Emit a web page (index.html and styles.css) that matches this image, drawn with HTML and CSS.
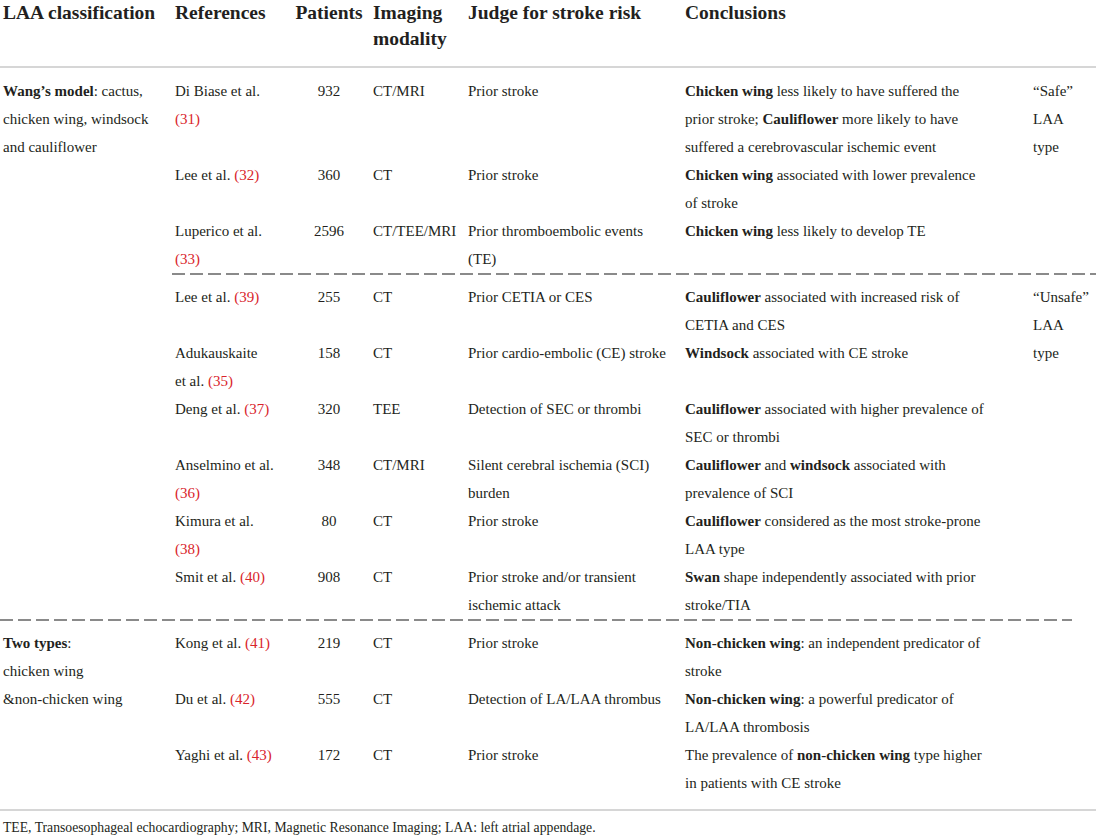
FILE: index.html
```html
<!DOCTYPE html>
<html lang="en">
<head>
  <meta charset="UTF-8">
  <title>LAA morphology and stroke risk</title>
  <link rel="stylesheet" href="styles.css">
</head>
<body>

  <table class="laa">
    <colgroup>
      <col class="c-class">
      <col class="c-ref">
      <col class="c-pat">
      <col class="c-img">
      <col class="c-judge">
      <col class="c-concl">
      <col class="c-type">
    </colgroup>
    <thead>
      <tr>
        <th>LAA classification</th>
        <th>References</th>
        <th class="num">Patients</th>
        <th>Imaging<br>modality</th>
        <th>Judge for stroke risk</th>
        <th>Conclusions</th>
        <th></th>
      </tr>
    </thead>
    <tbody>
      <tr class="first">
        <td rowspan="10"><b>Wang’s model</b>: cactus,<br>chicken wing, windsock<br>and cauliflower</td>
        <td>Di Biase et al.<br><span class="ref">(31)</span></td>
        <td class="num">932</td>
        <td>CT/MRI</td>
        <td>Prior stroke</td>
        <td><b>Chicken wing</b> less likely to have suffered the<br>prior stroke; <b>Cauliflower</b> more likely to have<br>suffered a cerebrovascular ischemic event</td>
        <td rowspan="3" class="type">“Safe”<br>LAA<br>type</td>
      </tr>
      <tr>
        <td>Lee et al. <span class="ref">(32)</span></td>
        <td class="num">360</td>
        <td>CT</td>
        <td>Prior stroke</td>
        <td><b>Chicken wing</b> associated with lower prevalence<br>of stroke</td>
      </tr>
      <tr>
        <td>Luperico et al.<br><span class="ref">(33)</span></td>
        <td class="num">2596</td>
        <td>CT/TEE/MRI</td>
        <td>Prior thromboembolic events<br>(TE)</td>
        <td><b>Chicken wing</b> less likely to develop TE</td>
      </tr>
      <tr class="sep">
        <td colspan="6"><div class="dash"></div></td>
      </tr>
      <tr>
        <td>Lee et al. <span class="ref">(39)</span></td>
        <td class="num">255</td>
        <td>CT</td>
        <td>Prior CETIA or CES</td>
        <td><b>Cauliflower</b> associated with increased risk of<br>CETIA and CES</td>
        <td rowspan="6" class="type">“Unsafe”<br>LAA<br>type</td>
      </tr>
      <tr>
        <td>Adukauskaite<br>et al. <span class="ref">(35)</span></td>
        <td class="num">158</td>
        <td>CT</td>
        <td>Prior cardio-embolic (CE) stroke</td>
        <td><b>Windsock</b> associated with CE stroke</td>
      </tr>
      <tr>
        <td>Deng et al. <span class="ref">(37)</span></td>
        <td class="num">320</td>
        <td>TEE</td>
        <td>Detection of SEC or thrombi</td>
        <td><b>Cauliflower</b> associated with higher prevalence of<br>SEC or thrombi</td>
      </tr>
      <tr>
        <td>Anselmino et al.<br><span class="ref">(36)</span></td>
        <td class="num">348</td>
        <td>CT/MRI</td>
        <td>Silent cerebral ischemia (SCI)<br>burden</td>
        <td><b>Cauliflower</b> and <b>windsock</b> associated with<br>prevalence of SCI</td>
      </tr>
      <tr>
        <td>Kimura et al.<br><span class="ref">(38)</span></td>
        <td class="num">80</td>
        <td>CT</td>
        <td>Prior stroke</td>
        <td><b>Cauliflower</b> considered as the most stroke-prone<br>LAA type</td>
      </tr>
      <tr>
        <td>Smit et al. <span class="ref">(40)</span></td>
        <td class="num">908</td>
        <td>CT</td>
        <td>Prior stroke and/or transient<br>ischemic attack</td>
        <td><b>Swan</b> shape independently associated with prior<br>stroke/TIA</td>
      </tr>
      <tr class="sep">
        <td colspan="7"><div class="dash short"></div></td>
      </tr>
      <tr>
        <td rowspan="3"><b>Two types</b>:<br>chicken wing<br>&amp;non-chicken wing</td>
        <td>Kong et al. <span class="ref">(41)</span></td>
        <td class="num">219</td>
        <td>CT</td>
        <td>Prior stroke</td>
        <td><b>Non-chicken wing</b>: an independent predicator of<br>stroke</td>
        <td></td>
      </tr>
      <tr>
        <td>Du et al. <span class="ref">(42)</span></td>
        <td class="num">555</td>
        <td>CT</td>
        <td>Detection of LA/LAA thrombus</td>
        <td><b>Non-chicken wing</b>: a powerful predicator of<br>LA/LAA thrombosis</td>
        <td></td>
      </tr>
      <tr class="last">
        <td>Yaghi et al. <span class="ref">(43)</span></td>
        <td class="num">172</td>
        <td>CT</td>
        <td>Prior stroke</td>
        <td>The prevalence of <b>non-chicken wing</b> type higher<br>in patients with CE stroke</td>
        <td></td>
      </tr>
    </tbody>
  </table>

  <p class="note">TEE, Transoesophageal echocardiography; MRI, Magnetic Resonance Imaging; LAA: left atrial appendage.</p>

</body>
</html>
```

FILE: styles.css
```css
* { box-sizing: border-box; }
body {
  margin: 0;
  font-family: "Liberation Serif", "DejaVu Serif", serif;
  color: #231f20;
  background: #fff;
}
.laa {
  width: 1096px;
  border-collapse: collapse;
  table-layout: fixed;
}
.c-class { width: 172px; }
.c-ref { width: 116px; }
.c-pat { width: 82px; }
.c-img { width: 95px; }
.c-judge { width: 217px; }
.c-concl { width: 318px; }
.c-type { width: 96px; }

.laa th,
.laa td {
  padding: 0 3px;
  text-align: left;
  vertical-align: top;
  white-space: nowrap;
}
.laa th {
  font-size: 19.5px;
  line-height: 26px;
  font-weight: bold;
  padding-bottom: 14px;
  border-bottom: 2px solid #d6d6d6;
}
.laa td {
  font-size: 15px;
  line-height: 28px;
}
.laa .num { text-align: center; }
.laa td.type { padding-left: 33px; }
.laa tr.first td { padding-top: 9px; }
.laa tbody { border-bottom: 2px solid #d6d6d6; }
.laa tr.last td { padding-bottom: 12px; }
.ref { color: #d9242b; }

.laa tr.sep td { padding: 0 0 8px; line-height: 0; }
.dash {
  height: 2px;
  background: repeating-linear-gradient(90deg, #8a8a8a 0 13px, transparent 13px 18px);
}
.dash.short { margin-right: 24px; }

.note {
  margin: 9px 0 0 3px;
  font-size: 13.7px;
  color: #231f20;
}
```
